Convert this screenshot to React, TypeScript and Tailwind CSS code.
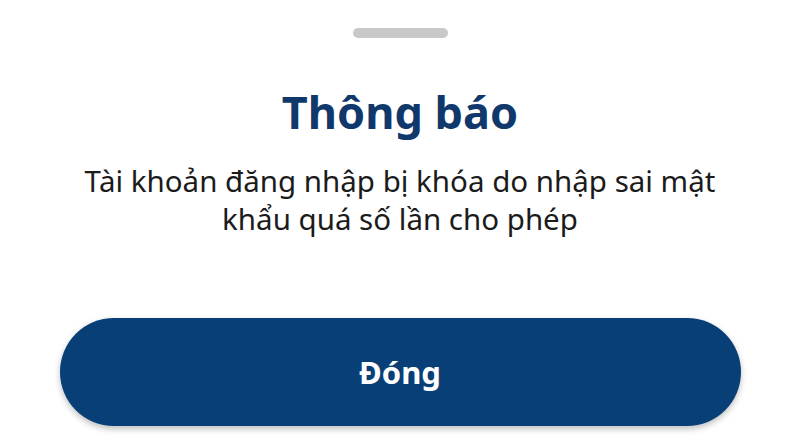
import React from 'react';

const App: React.FC = () => {
  return (
    <div
      className="w-[800px] h-[447px] bg-white flex flex-col items-center overflow-hidden"
      style={{ fontFamily: '"Noto Sans", Lato, sans-serif' }}
    >
      {/* drag handle */}
      <div className="mt-[28px] w-[95px] h-[10px] rounded-full bg-[#c9c9c9]" />

      <h1 className="mt-[46px] text-[45px] leading-[56px] font-bold text-[#11386b]">
        Thông báo
      </h1>

      <p className="mt-[22px] text-center text-[29.5px] leading-[38px] text-[#1b1b1b]">
        Tài khoản đăng nhập bị khóa do nhập sai mật
        <br />
        khẩu quá số lần cho phép
      </p>

      <button className="mt-[80px] w-[681px] h-[108px] rounded-full bg-[#093f77] text-white text-[31px] font-bold shadow-[0_3px_6px_rgba(0,0,0,0.25)]">
        Đóng
      </button>
    </div>
  );
};

export default App;
